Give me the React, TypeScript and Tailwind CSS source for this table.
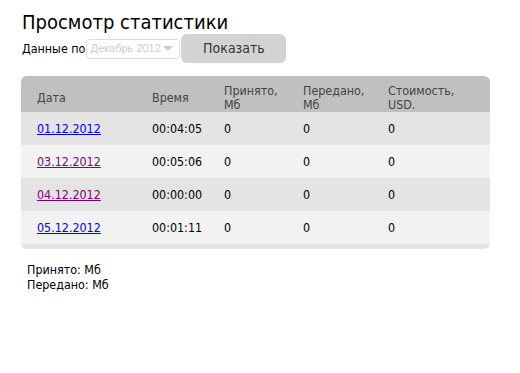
import React from "react";

type StatRow = {
  date: string;
  time: string;
  received: string;
  sent: string;
  cost: string;
  visited: boolean;
};

const rows: StatRow[] = [
  { date: "01.12.2012", time: "00:04:05", received: "0", sent: "0", cost: "0", visited: false },
  { date: "03.12.2012", time: "00:05:06", received: "0", sent: "0", cost: "0", visited: true },
  { date: "04.12.2012", time: "00:00:00", received: "0", sent: "0", cost: "0", visited: true },
  { date: "05.12.2012", time: "00:01:11", received: "0", sent: "0", cost: "0", visited: false },
];

const cols = "grid grid-cols-[131px_72px_79px_85px_1fr]";

export default function App() {
  return (
    <div
      className="h-[373px] w-[520px] bg-white text-black font-stretch-condensed"
      style={{ fontFamily: '"DejaVu Sans Condensed", "DejaVu Sans", Tahoma, sans-serif' }}
    >
      <div className="pl-[22px] pt-[9px]">
        <h1 className="text-[20px] leading-[26px] font-normal">Просмотр статистики</h1>

        <div className="mt-[-1px] flex items-center">
          <span className="text-[12.4px] leading-[16px]">Данные по</span>
          <div className="ml-[1px] flex h-[20px] w-[94px] items-center justify-between rounded-[3px] border border-[#dddddd] bg-white pl-[3px] pr-[6px]">
            <span
              className="whitespace-nowrap text-[11px] text-[#cccccc]"
              style={{ fontFamily: '"Liberation Sans", Arial, sans-serif', fontStretch: "normal" }}
            >
              Декабрь 2012
            </span>
            <span className="h-0 w-0 border-x-[5px] border-t-[5px] border-x-transparent border-t-[#cccccc]" />
          </div>
          <button
            type="button"
            className="ml-[1px] h-[29px] w-[105px] rounded-[6px] bg-[#d3d3d3] text-[14px] text-[#333333]"
          >
            Показать
          </button>
        </div>
      </div>

      <div className="ml-[21px] mt-[13px] w-[469px] overflow-hidden rounded-[6px] bg-[#e4e4e4] pb-[5px] text-[12.4px]">
        <div className={`${cols} h-[36px] items-center bg-[#c0c0c0] pt-[7px] leading-[14px] text-[#444444]`}>
          <span className="pl-4">Дата</span>
          <span>Время</span>
          <span>
            Принято,
            <br />
            Мб
          </span>
          <span>
            Передано,
            <br />
            Мб
          </span>
          <span>
            Стоимость,
            <br />
            USD.
          </span>
        </div>
        {rows.map((row, i) => (
          <div
            key={row.date}
            className={`${cols} h-[33px] items-center pt-px ${i % 2 === 0 ? "bg-[#e4e4e4]" : "bg-[#f2f2f2]"}`}
          >
            <span className="pl-4">
              <a href="#" className={row.visited ? "text-[#800080] underline" : "text-[#0000ee] underline"}>
                {row.date}
              </a>
            </span>
            <span>{row.time}</span>
            <span>{row.received}</span>
            <span>{row.sent}</span>
            <span>{row.cost}</span>
          </div>
        ))}
      </div>

      <div className="ml-[27px] mt-[13px] text-[12.4px] leading-[15px]">
        <div>Принято: Мб</div>
        <div>Передано: Мб</div>
      </div>
    </div>
  );
}
